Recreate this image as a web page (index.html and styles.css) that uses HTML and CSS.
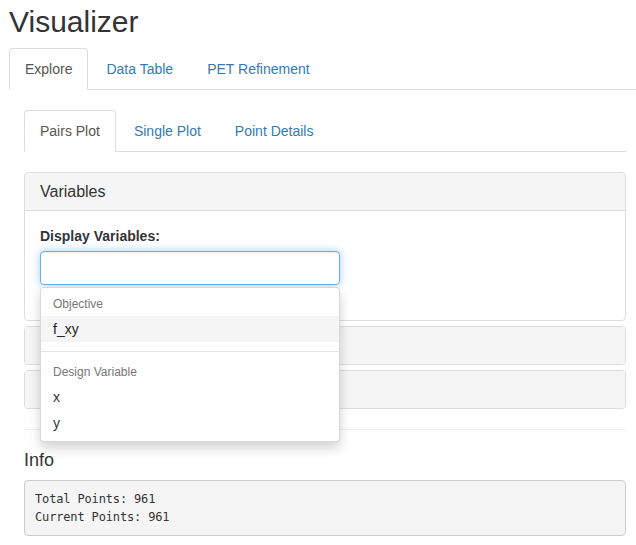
FILE: index.html
```html
<!DOCTYPE html>
<html>
<head>
<meta charset="utf-8">
<title>Visualizer</title>
<link rel="stylesheet" href="styles.css">
</head>
<body>
<div class="page">
  <h2 class="title">Visualizer</h2>
  <ul class="tabs">
    <li class="active"><a>Explore</a></li>
    <li><a>Data Table</a></li>
    <li><a>PET Refinement</a></li>
  </ul>
  <div class="tab-content">
    <ul class="tabs">
      <li class="active"><a>Pairs Plot</a></li>
      <li><a>Single Plot</a></li>
      <li><a>Point Details</a></li>
    </ul>
    <div class="pane">
      <div class="panel-group">
        <div class="panel">
          <div class="panel-heading"><h4 class="panel-title">Variables</h4></div>
          <div class="panel-body">
            <div class="form-group">
              <label class="control-label">Display Variables:</label>
              <div class="select">
                <div class="select-input"></div>
                <div class="dropdown">
                  <div class="optgroup">
                    <div class="optgroup-header">Objective</div>
                    <div class="option active">f_xy</div>
                  </div>
                  <div class="optgroup">
                    <div class="optgroup-header">Design Variable</div>
                    <div class="option">x</div>
                    <div class="option">y</div>
                  </div>
                </div>
              </div>
            </div>
          </div>
        </div>
        <div class="panel">
          <div class="panel-heading"><h4 class="panel-title"></h4></div>
        </div>
        <div class="panel">
          <div class="panel-heading"><h4 class="panel-title"></h4></div>
        </div>
      </div>
      <hr class="rule">
      <h4 class="info-title">Info</h4>
      <pre class="info">Total Points: 961
Current Points: 961</pre>
    </div>
  </div>
</div>
</body>
</html>
```

FILE: styles.css
```css
* { box-sizing: border-box; }
html, body {
  margin: 0;
  padding: 0;
  overflow: hidden;
  background: #fff;
}
body {
  font-family: "Liberation Sans", Arial, Helvetica, sans-serif;
  font-size: 14px;
  line-height: 1.42857;
  color: #333;
}
.page {
  width: 641px;
  padding-left: 9px;
}
.title {
  font-size: 30px;
  font-weight: 500;
  line-height: 33px;
  margin: 5px 0 10px;
  color: #333;
}
.tabs {
  list-style: none;
  margin: 0;
  padding: 0;
  display: flex;
  border-bottom: 1px solid #ddd;
}
.tabs li {
  margin-bottom: -1px;
}
.tabs a {
  display: block;
  padding: 10px 15px;
  margin-right: 2px;
  line-height: 20px;
  border: 1px solid transparent;
  border-radius: 4px 4px 0 0;
  color: #337ab7;
  cursor: pointer;
}
.tabs li.active a {
  color: #555;
  background: #fff;
  border-color: #ddd #ddd transparent;
}
.tab-content {
  padding: 20px 15px 0;
}
.pane {
  padding-top: 20px;
}
.panel-group {
  margin-bottom: 20px;
}
.panel {
  border: 1px solid #ddd;
  border-radius: 4px;
  background: #fff;
}
.panel + .panel {
  margin-top: 5px;
}
.panel-heading {
  background: #f5f5f5;
  padding: 10px 15px;
  border-radius: 3px;
}
.panel > .panel-heading:not(:last-child) {
  border-bottom: 1px solid #ddd;
  border-radius: 3px 3px 0 0;
}
.panel-title {
  margin: 0;
  font-size: 16px;
  font-weight: 500;
  line-height: 17px;
  min-height: 17px;
  color: #333;
}
.panel-body {
  padding: 15px;
}
.form-group {
  width: 300px;
  margin-bottom: 20px;
}
.control-label {
  display: block;
  font-weight: bold;
  margin-bottom: 5px;
  line-height: 20px;
}
.select {
  position: relative;
}
.select-input {
  height: 34px;
  border: 1px solid #66afe9;
  border-radius: 4px;
  background: #fff;
  box-shadow: inset 0 1px 1px rgba(0,0,0,.075), 0 0 8px rgba(102,175,233,.6);
}
.dropdown {
  position: absolute;
  top: 36px;
  left: 0;
  width: 300px;
  z-index: 10;
  background: #fff;
  border: 1px solid rgba(0,0,0,.15);
  border-radius: 4px;
  box-shadow: 0 6px 12px rgba(0,0,0,.175);
  padding: 5px 0;
}
.optgroup + .optgroup::before {
  content: "";
  display: block;
  height: 1px;
  margin: 9px 0;
  background: #e5e5e5;
}
.optgroup-header {
  padding: 3px 12px;
  font-size: 12px;
  line-height: 17px;
  color: #777;
}
.option {
  padding: 3px 12px;
  line-height: 20px;
  color: #333;
}
.option.active {
  background: #f5f5f5;
  color: #262626;
}
.rule {
  margin: 0 0 20px;
  border: 0;
  border-top: 1px solid #eee;
}
.info-title {
  font-size: 18px;
  font-weight: 500;
  line-height: 20px;
  margin: 0 0 10px;
  color: #333;
}
.info {
  margin: 0;
  padding: 9px 10px;
  font-family: "DejaVu Sans Mono", "Liberation Mono", monospace;
  font-size: 12px;
  letter-spacing: -0.15px;
  line-height: 18px;
  color: #333;
  background: #f5f5f5;
  border: 1px solid #ccc;
  border-radius: 4px;
}
```
